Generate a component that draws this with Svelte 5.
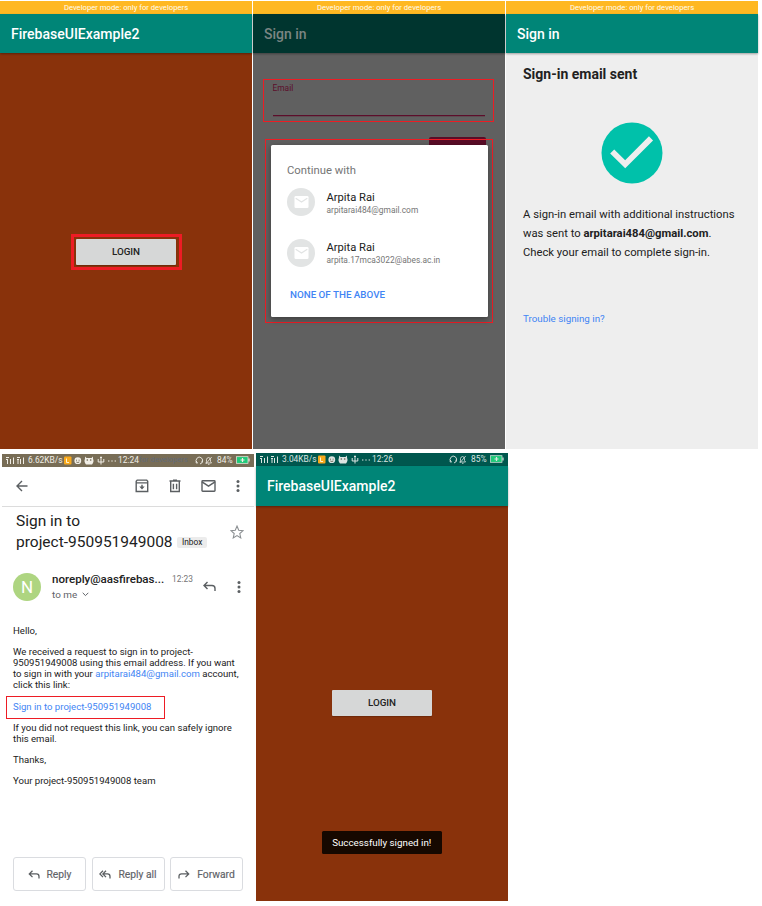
<script>
  const accounts = [
    { name: 'Arpita Rai', email: 'arpitarai484@gmail.com' },
    { name: 'Arpita Rai', email: 'arpita.17mca3022@abes.ac.in' }
  ];
</script>

{#snippet developer()}
  <div class="developer">Developer mode: only for developers</div>
{/snippet}

{#snippet status(speed, time, battery, faint)}
  <div class="status" class:olive={faint}>
    <svg class="signals" width="21" height="9" viewBox="0 0 21 9">
      <path d="M1 1.500h3M1 3.500h2M2.500 3v5M5.500 3v5M8.500 1.500v6.500M12 1.500h3M12 3.500h2M13 3v5M15.500 3v5M18.500 1.500v6.500" fill="none" stroke="currentColor" />
    </svg>
    <span class="speed">{speed}</span>
    <svg class="notices" width="58" height="9" viewBox="0 0 58 9">
      <rect x="0" y=".5" width="7.500" height="8" rx="1" fill="#f8a91c" />
      <path d="M2.500 2.500v4h2.500" fill="none" stroke="#fff2ce" />
      <circle cx="13.800" cy="4.700" r="3.400" fill="currentColor" />
      <path d="M12 4.200h1M14.600 4.200h1M12.300 6q1.500 1 3 0" fill="none" stroke="#655c48" stroke-width=".9" />
      <path d="M21 .5l1.500 1.500h5L29 .5v2q1 2 0 4.500l-1 1.500h-6L21 7q-1-2.500 0-4.500z" fill="currentColor" />
      <circle cx="23.300" cy="4" r=".8" fill="#655c48" /><circle cx="26.700" cy="4" r=".8" fill="#655c48" />
      <path d="M37 .5v8M34.200 3v3h5.600V3M36 1.500h2" fill="none" stroke="currentColor" />
      <path d="M44 5h1.400M47.300 5h1.400M50.600 5h1.400" stroke="currentColor" stroke-width="1.200" />
    </svg>
    <span class="clock">{time}</span>
    <span class="ghost">{faint ? 'for developers' : ''}</span>
    <svg class="quiet" width="18" height="9" viewBox="0 0 18 9">
      <path d="M2.300 6.800A3.200 3.200 0 1 1 6.800 6.400M1.200 5v2h1.500M7.300 4.500v2L5 8" fill="none" stroke="currentColor" stroke-width=".9" />
      <path d="M11 7h5.500l-1-1.500V3.500q-.5-2-2-2t-2 2v2zM10.700 8l6-7M13 8.300h1.500" fill="none" stroke="currentColor" stroke-width=".8" />
    </svg>
    <span class="percent">{battery}</span>
    <svg width="14" height="8" viewBox="0 0 14 8">
      <rect x=".5" y=".7" width="11.500" height="6.600" fill="#20c979" stroke="currentColor" stroke-width=".7" />
      <path d="M13 2.500v3M4.500 4h4M6.500 2v4" stroke="currentColor" stroke-width="1.200" />
    </svg>
  </div>
{/snippet}

{#snippet more()}
  <svg width="4" height="14" viewBox="0 0 4 14" fill="#5b5f62"><circle cx="2" cy="2.500" r="1.500" /><circle cx="2" cy="7" r="1.500" /><circle cx="2" cy="11.500" r="1.500" /></svg>
{/snippet}

<main>
  <div class="row">
    <section class="phone rust">
      {@render developer()}
      <header class="appbar">FirebaseUIExample2</header>
      <div class="button-frame"><button class="login">LOGIN</button></div>
    </section>

    <section class="phone signin">
      {@render developer()}
      <header class="appbar dim">Sign in</header>
      <div class="field"><label for="email">Email</label><div id="email" class="underline"></div></div>
      <div class="next"></div>
      <div class="dialog-outline"></div>
      <div class="dialog">
        <h2>Continue with</h2>
        {#each accounts as account}
          <div class="account">
            <div class="avatar">
              <svg width="15" height="12" viewBox="0 0 15 12"><rect x=".5" width="14" height="12" rx="1.300" fill="#fff" /><path d="M1.700 2.300L7.500 6l5.800-3.700" fill="none" stroke="#e2e4e4" stroke-width="1.300" /></svg>
            </div>
            <div class="who"><strong>{account.name}</strong><span>{account.email}</span></div>
          </div>
        {/each}
        <a class="none" href="#none">NONE OF THE ABOVE</a>
      </div>
    </section>

    <section class="phone sent">
      {@render developer()}
      <header class="appbar">Sign in</header>
      <h1>Sign-in email sent</h1>
      <svg class="check" width="62" height="62" viewBox="0 0 62 62">
        <circle cx="31" cy="31" r="30.500" fill="#00c1aa" />
        <path d="M11.200 29.500L24.200 42.200l25.800-25.800" fill="none" stroke="#eee" stroke-width="5.800" />
      </svg>
      <p>A sign-in email with additional instructions<br />was sent to <b>arpitarai484@gmail.com</b>.<br />Check your email to complete sign-in.</p>
      <a class="trouble" href="#trouble">Trouble signing in?</a>
    </section>
  </div>

  <div class="row second">
    <section class="phone mail">
      {@render status('6.62KB/s', '12:24', '84%', true)}
      <nav>
        <svg width="12" height="12" viewBox="0 0 12 12" fill="none" stroke="#5b5f62" stroke-width="1.400"><path d="M11.500 6H1M6 1L1 6l5 5" /></svg>
        <svg class="archive" width="14" height="14" viewBox="0 0 14 14" fill="none" stroke="#5b5f62" stroke-width="1.400"><path d="M1.200 4.300V12.500h11.500V4.300M1.200 4.300v-2l1-1.200h9.500l1 1.200v2M1.200 3.900h11.500M7 5.800v3.500" /><path d="M4.300 7.600h5.400L7 10.500z" fill="#5b5f62" stroke="none" /></svg>
        <svg class="trash" width="12" height="14" viewBox="0 0 12 14" fill="none" stroke="#5b5f62" stroke-width="1.400"><path d="M.500 2h11M4 1.300h4M1.700 2.500v10h8.600v-10M4.400 4.800v5.400M7.600 4.800v5.400" /></svg>
        <svg class="envelope" width="15" height="12" viewBox="0 0 15 12" fill="none" stroke="#5b5f62" stroke-width="1.400"><rect x="1" y=".8" width="13" height="10.400" rx=".7" /><path d="M1 1.800l6.500 4.400L14 1.800" /></svg>
        {@render more()}
      </nav>
      <div class="subject">
        <h3>Sign in to<br />project-950951949008 <span class="inbox">Inbox</span></h3>
        <svg class="star" width="14" height="14" viewBox="0 0 13 13" fill="none" stroke="#8b8f92"><path d="M6.500 1l1.600 3.800 4.100.4-3.100 2.700.9 4.100-3.500-2.200L3 12l.9-4.100L.8 5.200l4.100-.4z" /></svg>
      </div>
      <div class="sender">
        <div class="initial">N</div>
        <div class="from"><strong>noreply@aasfirebas...</strong><span>to me <svg width="7" height="5" viewBox="0 0 7 5" fill="none" stroke="#5f6368"><path d="M.700 .8l2.800 2.800L6.300.8" /></svg></span></div>
        <time>12:23</time>
        <svg class="reply-icon" width="13" height="11" viewBox="0 0 13 11" fill="none" stroke="#5b5f62" stroke-width="1.400"><path d="M4.500 1L1 4.500 4.500 8M1 4.500h8q3 0 3 3V10" /></svg>
        {@render more()}
      </div>
      <article>
        <p>Hello,</p>
        <p>We received a request to sign in to project-<br />950951949008 using this email address. If you want<br />to sign in with your <a href="#address">arpitarai484@gmail.com</a> account,<br />click this link:</p>
        <p class="link"><a href="#signin">Sign in to project-950951949008</a></p>
        <p>If you did not request this link, you can safely ignore<br />this email.</p>
        <p>Thanks,</p>
        <p>Your project-950951949008 team</p>
      </article>
      <footer>
        <div class="action"><svg width="12" height="9" viewBox="0 0 12 9" fill="none" stroke="#5b5f62" stroke-width="1.300"><path d="M4.500 .7L1.300 3.900l3.200 3.200M1.300 3.900h7.200q2.500 0 2.500 2.500v2" /></svg>Reply</div>
        <div class="action"><svg width="12" height="9" viewBox="0 0 12 9" fill="none" stroke="#5b5f62" stroke-width="1.300"><path d="M4 .7L.9 3.900 4 7.100M7 .7L3.900 3.900 7 7.100M4 3.900h4.500q2.500 0 2.500 2.500v2" /></svg>Reply all</div>
        <div class="action"><svg width="12" height="9" viewBox="0 0 12 9" fill="none" stroke="#5b5f62" stroke-width="1.300"><path d="M7.500 .7l3.200 3.200-3.200 3.200M10.700 3.900H3.500Q1 3.900 1 6.400v2" /></svg>Forward</div>
      </footer>
    </section>

    <section class="phone rust signed">
      {@render status('3.04KB/s', '12:26', '85%', false)}
      <header class="appbar">FirebaseUIExample2</header>
      <button class="login plain">LOGIN</button>
      <div class="toast">Successfully signed in!</div>
    </section>
  </div>
</main>

<style>
  :global(body) { background: #fff; }
  main { width: 762px; height: 906px; box-sizing: border-box; padding-top: 1px; overflow: hidden; font-family: Roboto, "Liberation Sans", sans-serif; color: #212121; }
  .row { display: flex; gap: 1px; }
  .second { margin: 5px 0 0 2px; gap: 2px; }
  .phone { position: relative; width: 252px; height: 448px; display: flex; flex-direction: column; flex: none; }
  svg { display: block; flex: none; }
  h1, h2, h3, p { margin: 0; font-weight: 400; }
  a { color: #4285f4; text-decoration: none; }
  .rust { background: #89320b; }
  .developer { height: 12.500px; line-height: 13.500px; background: #ffb822; color: #fffdf0; text-align: center; font-size: 7.700px; white-space: nowrap; flex: none; }
  .appbar { height: 39.500px; line-height: 41px; padding-left: 11px; background: #008577; color: #fff; font-size: 14px; font-weight: 500; flex: none; box-shadow: 0 1px 2px #0005; }
  .login { font: 500 9.800px/26px Roboto, sans-serif; color: #222; width: 100px; height: 26px; padding: 0; background: #d6d7d7; border: 0; border-radius: 1px; box-shadow: 0 1px 1px #0003; }
  .button-frame { border: 3px solid #ed1c24; width: 103px; height: 30px; margin: 181px 0 0 71px; padding-left: 2px; display: flex; align-items: center; }
  .signin { background: #606060; }
  .dim { background: #00352f; color: #7b8583; }
  .field { border: 1px solid #ed1c24; width: 229px; height: 41px; margin: 26px 0 0 10px; box-sizing: content-box; display: flex; flex-direction: column; }
  .field label { font-size: 8.400px; line-height: 10px; color: #5c0e2b; margin: 3px 0 0 8.500px; }
  .underline { margin: 22px 8px 0 8.500px; height: 1px; flex: none; background: #5c0e2b; box-shadow: 0 1px #5c0e2b44; }
  .next { width: 57px; height: 12px; background: #5a0c27; border-radius: 2px; margin: 14.500px 0 0 176px; }
  .dialog-outline { position: absolute; left: 12px; top: 138px; width: 226px; height: 182px; border: 1px solid #ed1c24; }
  .dialog { position: absolute; left: 17.500px; top: 144px; width: 217px; height: 172px; box-sizing: border-box; background: #fff; border-radius: 1.500px; box-shadow: 0 2px 6px #0006; padding: 19px 0 0 16.500px; display: flex; flex-direction: column; }
  .dialog h2 { font-size: 11.300px; line-height: 14px; color: #757575; margin-bottom: 6.500px; }
  .account { display: flex; height: 50.500px; gap: 11.500px; }
  .avatar { width: 28px; height: 28px; margin-top: 3.500px; border-radius: 50%; background: #e2e4e4; display: flex; align-items: center; justify-content: center; }
  .who { display: flex; flex-direction: column; padding-top: 6px; }
  .who strong { font-weight: 400; font-size: 11.200px; line-height: 13px; }
  .who span { font-size: 8.400px; line-height: 12px; color: #757575; }
  .none { font-size: 9.800px; line-height: 12px; font-weight: 500; margin: 3.500px 0 0 3px; }
  .sent { background: #eee; }
  .sent h1 { font-size: 14px; line-height: 18px; font-weight: 700; margin: 12px 0 0 17px; }
  .check { margin: 39px 0 0 95px; }
  .sent p { font-size: 11.250px; line-height: 19px; margin: 20.500px 0 0 17px; white-space: nowrap; }
  .trouble { font-size: 9.800px; line-height: 12px; margin: 51.500px 0 0 17px; }
  .status { height: 13px; display: flex; align-items: center; background: #00574e; color: #dce5e2; font-size: 8.400px; line-height: 10px; flex: none; padding: 0 3px 1px; box-sizing: border-box; white-space: nowrap; }
  .olive { background: #786d56; color: #f1eee6; }
  .speed { width: 36px; flex: none; margin-left: 2px; }
  .clock { width: 20px; flex: none; margin-left: -4px; }
  .ghost { color: #616a78; width: 52px; flex: none; margin-left: 1px; font-size: 7.700px; }
  .quiet { margin-left: 4px; }
  .percent { width: 19px; flex: none; margin-left: 4px; }
  .mail { background: #fff; }
  nav { display: flex; align-items: center; height: 39.500px; box-sizing: border-box; padding: 0 0 0 13.500px; border-bottom: 1px solid #dcdcdc; flex: none; }
  .archive { margin-left: 107px; }
  .trash { margin-left: 20px; }
  .envelope { margin: 0 20px 0 20px; }
  .subject { display: flex; height: 61px; flex: none; }
  .subject h3 { font-size: 15.500px; line-height: 21px; margin: 4px 0 0 14px; width: 213.500px; white-space: nowrap; }
  .inbox { display: inline-block; vertical-align: 2px; font-size: 8.400px; line-height: 11px; background: #ececec; border-radius: 2px; padding: 0 5px; margin-left: .5px; }
  .star { margin: 18px 0 0 .5px; }
  .sender { display: flex; align-items: center; height: 30px; margin: 4px 0 0 11px; flex: none; }
  .initial { width: 28px; height: 28px; border-radius: 50%; background: #aed581; color: #fff; text-align: center; font-size: 17px; line-height: 28px; }
  .from { margin-left: 11px; width: 120px; flex: none; display: flex; flex-direction: column; }
  .from strong { font: 500 11.550px/16px Roboto, sans-serif; white-space: nowrap; }
  .from span { font-size: 9.900px; line-height: 16px; color: #5f6368; display: flex; align-items: center; gap: 5px; }
  time { font-size: 8.400px; color: #757575; width: 31px; margin-top: -15px; }
  .reply-icon { margin-right: 20.500px; }
  article { margin: 23.500px 0 0 11px; font-size: 9.570px; line-height: 11.200px; white-space: nowrap; }
  article p { margin-bottom: 9.500px; }
  article .link { box-sizing: border-box; width: 159px; height: 23px; border: 1px solid #ed1c24; margin: -4px 0 3px -7px; padding: 3.500px 0 0 6px; }
  footer { display: flex; gap: 5.500px; position: absolute; left: 11px; top: 403px; }
  .action { width: 73px; height: 34px; box-sizing: border-box; border: 1px solid #dadce0; border-radius: 3px; display: flex; align-items: center; justify-content: center; gap: 7px; font-size: 10.300px; color: #5f6368; -webkit-text-stroke: .15px #5f6368; white-space: nowrap; }
  .signed { margin-top: -1px; }
  .plain { margin: 184.500px 0 0 76px; }
  .toast { width: 119.500px; height: 23px; margin: 115px 0 0 66px; border-radius: 1.500px; background: #160800; color: #fff; font-size: 9.800px; line-height: 23px; text-align: center; }
</style>
